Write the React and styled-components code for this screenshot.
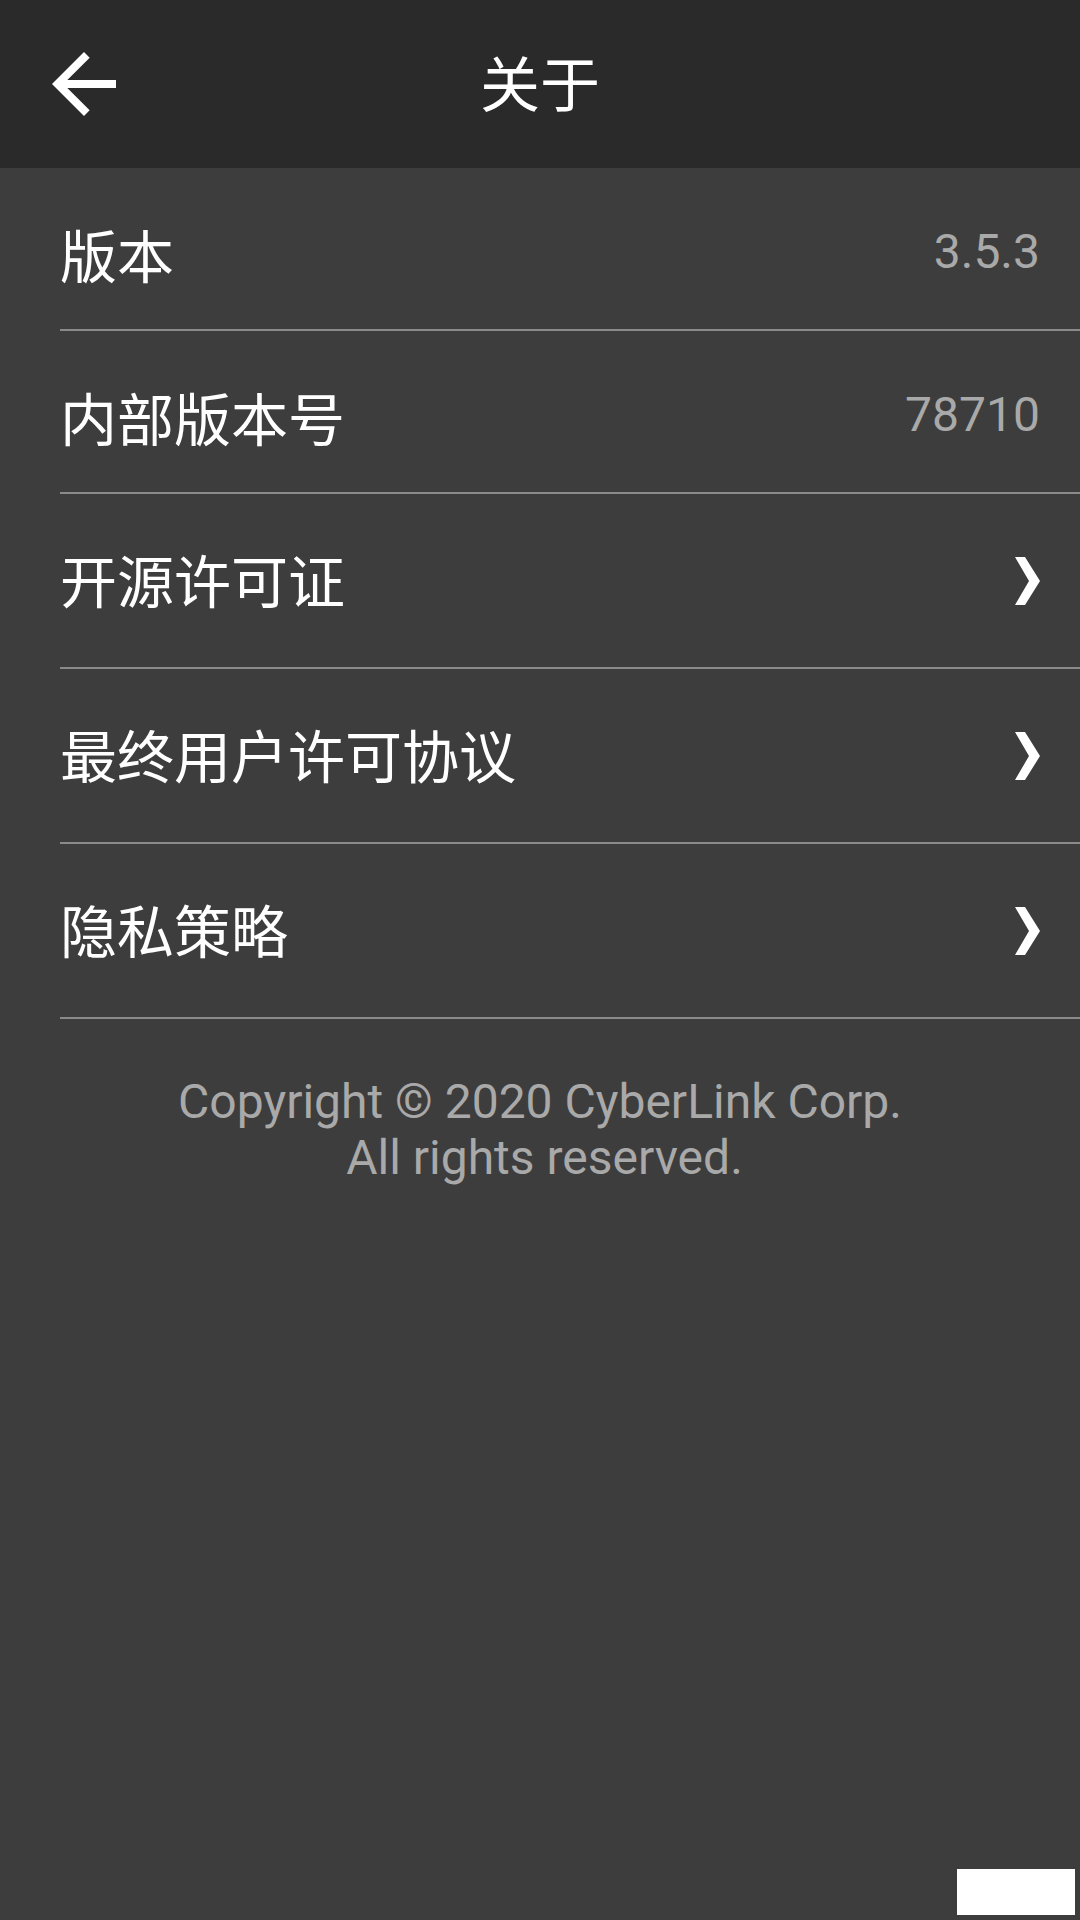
import React from "react";
import styled, { createGlobalStyle } from "styled-components";

const Global = createGlobalStyle`
  html, body { margin: 0; padding: 0; background: #3d3d3d; }
  body { font-family: Roboto, "Noto Sans CJK SC", sans-serif; }
  * { box-sizing: border-box; }
`;

const Page = styled.div`
  position: relative;
  width: 1080px;
  min-height: 1920px;
  background: #3d3d3d;
  display: flex;
  flex-direction: column;
`;

const Header = styled.header`
  height: 168px;
  background: #2a2a2a;
  display: grid;
  grid-template-columns: 168px 1fr 168px;
  align-items: center;
`;

const BackButton = styled.button`
  width: 96px;
  height: 96px;
  margin-left: 36px;
  padding: 0;
  border: none;
  background: transparent;
  color: #ffffff;
  display: flex;
  align-items: center;
  justify-content: center;
  svg { width: 96px; height: 96px; display: block; }
`;

const Title = styled.h1`
  margin: 0 0 6px 0;
  text-align: center;
  color: #ffffff;
  font-family: "Noto Sans CJK SC", sans-serif;
  font-weight: 400;
  font-size: 60px;
  line-height: 1;
`;

const List = styled.div`
  display: flex;
  flex-direction: column;
`;

const Row = styled.div`
  height: ${(p) => (p.$tall ? "175px" : "163px")};
  margin-left: 60px;
  padding-right: 40px;
  border-bottom: 2px solid #8a8a8a;
  display: flex;
  align-items: center;
  justify-content: space-between;
`;

const Label = styled.span`
  color: #ffffff;
  font-family: "Noto Sans CJK SC", sans-serif;
  font-size: 57px;
  line-height: 1;
  margin: ${(p) => (p.$shift ? "9px 0 0 0" : "0 0 5px 0")};
`;

const Value = styled.span`
  color: #a9a9a9;
  font-family: Roboto, sans-serif;
  font-size: 48px;
  line-height: 1;
  margin-top: 6px;
`;

const Chevron = styled.svg`
  width: 25px;
  height: 48px;
  display: block;
`;

const Copyright = styled.div`
  padding-top: 55px;
  text-align: center;
  color: #a9a9a9;
  font-family: Roboto, sans-serif;
  font-size: 48px;
  line-height: 56px;
`;

const CopyLine = styled.div`
  padding-left: ${(p) => p.$indent || 0}px;
`;

const CornerBox = styled.div`
  position: absolute;
  left: 957px;
  top: 1869px;
  width: 118px;
  height: 46px;
  background: #ffffff;
`;

const ChevronIcon = () => (
  <Chevron viewBox="0 0 25 48">
    <polygon points="0,0 10,0 25,24 10,48 0,48 14,24" fill="#ffffff" />
  </Chevron>
);

const rows = [
  { label: "版本", value: "3.5.3" },
  { label: "内部版本号", value: "78710" },
  { label: "开源许可证", link: true },
  { label: "最终用户许可协议", link: true },
  { label: "隐私策略", link: true },
];

export default function App() {
  return (
    <Page>
      <Global />
      <Header>
        <BackButton aria-label="back">
          <svg viewBox="0 0 24 24">
            <path
              fill="currentColor"
              d="M20 11H7.83l5.59-5.59L12 4l-8 8 8 8 1.41-1.41L7.83 13H20v-2z"
            />
          </svg>
        </BackButton>
        <Title>关于</Title>
        <div />
      </Header>
      <List>
        {rows.map((r) => (
          <Row key={r.label} $tall={r.link}>
            <Label $shift={!r.link}>{r.label}</Label>
            {r.link ? <ChevronIcon /> : <Value>{r.value}</Value>}
          </Row>
        ))}
      </List>
      <Copyright>
        <CopyLine>Copyright © 2020 CyberLink Corp.</CopyLine>
        <CopyLine $indent={9}>All rights reserved.</CopyLine>
      </Copyright>
      <CornerBox />
    </Page>
  );
}
